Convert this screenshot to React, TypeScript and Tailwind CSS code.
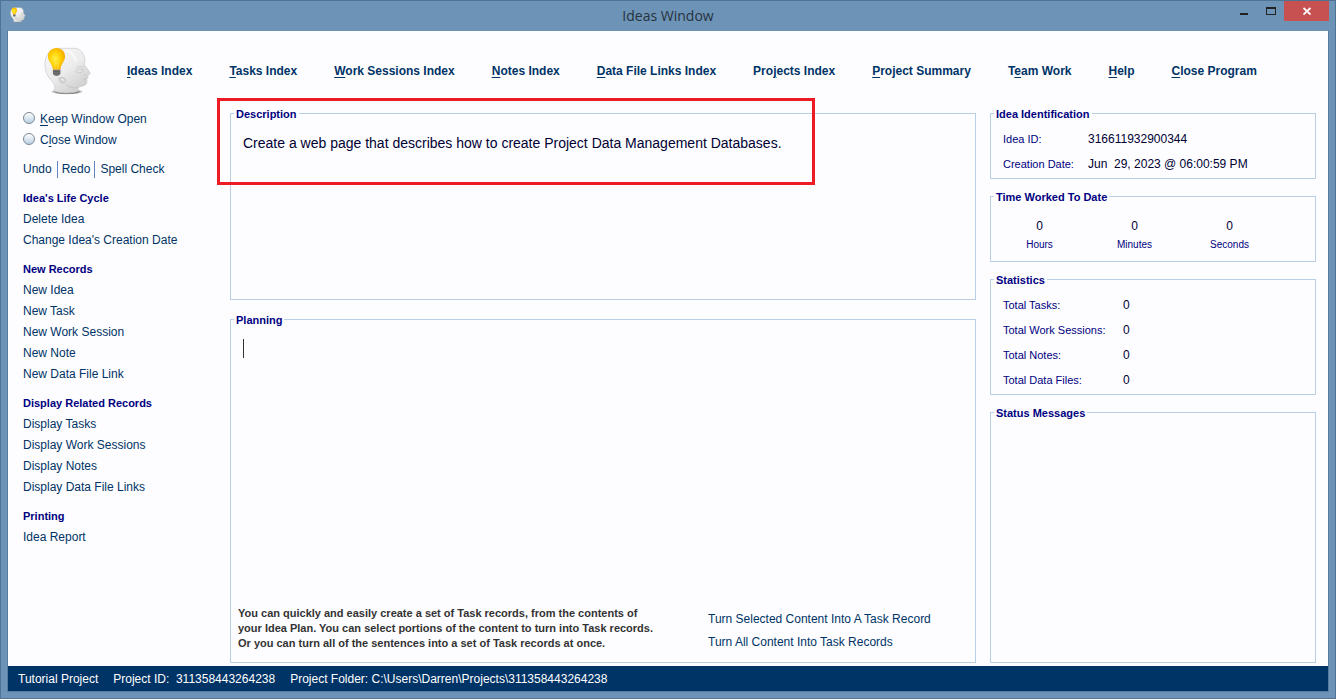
import { useState, type ReactNode } from 'react';
import clsx from 'clsx';

const navItems = [
  { label: 'Ideas Index', key: 0 },
  { label: 'Tasks Index', key: 0 },
  { label: 'Work Sessions Index', key: 0 },
  { label: 'Notes Index', key: 0 },
  { label: 'Data File Links Index', key: 0 },
  { label: 'Projects Index', key: 3 },
  { label: 'Project Summary', key: 0 },
  { label: 'Team Work', key: 1 },
  { label: 'Help', key: 0 },
  { label: 'Close Program', key: 0 },
];

const menuGroups = [
  { title: "Idea's Life Cycle", items: ['Delete Idea', "Change Idea's Creation Date"] },
  {
    title: 'New Records',
    items: ['New Idea', 'New Task', 'New Work Session', 'New Note', 'New Data File Link'],
  },
  {
    title: 'Display Related Records',
    items: ['Display Tasks', 'Display Work Sessions', 'Display Notes', 'Display Data File Links'],
  },
  { title: 'Printing', items: ['Idea Report'] },
];

const windowModes = [
  { value: 'keep', label: 'Keep Window Open', key: 0 },
  { value: 'close', label: 'Close Window', key: 1 },
];

const timeWorked = [
  { unit: 'Hours', value: 0 },
  { unit: 'Minutes', value: 0 },
  { unit: 'Seconds', value: 0 },
];

const statistics = [
  { label: 'Total Tasks:', value: 0 },
  { label: 'Total Work Sessions:', value: 0 },
  { label: 'Total Notes:', value: 0 },
  { label: 'Total Data Files:', value: 0 },
];

// Label with its keyboard shortcut letter underlined
function Mnemonic({ label, index }: { label: string; index: number }) {
  return (
    <span className="whitespace-pre">
      {label.slice(0, index)}
      <span className="underline underline-offset-2">{label[index]}</span>
      {label.slice(index + 1)}
    </span>
  );
}

function IdeaLogo({ id, className }: { id: string; className: string }) {
  return (
    <svg viewBox="40 28 146 150" className={className} aria-hidden="true">
      <defs>
        <linearGradient id={`${id}-head`} x1="0.1" y1="0" x2="0.8" y2="1">
          <stop offset="0" stopColor="#f7f7f7" />
          <stop offset="0.5" stopColor="#ececec" />
          <stop offset="1" stopColor="#cacaca" />
        </linearGradient>
        <radialGradient id={`${id}-shade`} cx="0.5" cy="0.5" r="0.5">
          <stop offset="0" stopColor="#444" />
          <stop offset="0.7" stopColor="#666" stopOpacity="0.8" />
          <stop offset="1" stopColor="#888" stopOpacity="0" />
        </radialGradient>
        <radialGradient id={`${id}-glow`} cx="0.42" cy="0.5" r="0.65">
          <stop offset="0" stopColor="#fff04a" />
          <stop offset="0.5" stopColor="#ffd000" />
          <stop offset="1" stopColor="#f59e00" />
        </radialGradient>
      </defs>
      <ellipse cx="110" cy="166" rx="50" ry="9" fill={`url(#${id}-shade)`} />
      <path
        d="M82 34H138C151 37 162 50 164 66C165 77 162 81 164 86L179 106C182 111 178 115 173 115L174 123L170 128C172 136 170 144 163 147C155 150 148 150 144 154C142 158 145 161 147 163C130 172 88 172 70 163C76 154 73 145 63 133C49 118 43 103 43 82C43 55 58 36 82 34Z"
        fill={`url(#${id}-head)`}
        stroke="#c8c8c8"
        strokeWidth="2"
      />
      <path d="M104 38C125 45 134 56 138 74" fill="none" stroke="#fff" strokeWidth="8" opacity="0.5" />
      <path d="M136 104C142 96 151 95 160 99L156 107C149 110 141 109 136 104Z" fill="#e2e2e2" stroke="#c2c2c2" strokeWidth="2" />
      <path d="M137 94C145 88 154 88 163 92" fill="none" stroke="#d0d0d0" strokeWidth="3" />
      <path d="M86 125C93 121 104 123 106 130C107 138 100 142 94 139C89 137 86 132 86 125Z" fill="#d6d6d6" stroke="#b8b8b8" strokeWidth="2" />
      <path d="M92 129C98 127 101 130 100 134" fill="none" stroke="#f4f4f4" strokeWidth="3" />
      <path d="M158 128L170 127M168 116C164 117 162 115 163 112" fill="none" stroke="#bcbcbc" strokeWidth="2" />
      <path d="M108 144C118 154 131 156 142 153" fill="none" stroke="#c2c2c2" strokeWidth="3" />
      <path
        d="M78 33C62 33 52 44 52 59C52 74 66 81 67 99H90C91 81 104 74 104 59C104 44 94 33 78 33Z"
        fill={`url(#${id}-glow)`}
      />
      <path d="M74 98L73 77L78 81L83 77L82 98" fill="none" stroke="#ffe96a" strokeWidth="2" />
      <path d="M67 99H90V109C90 115 84 118 78 118C72 118 67 115 67 109Z" fill="#777" />
      <path d="M68 104H89M68 110H89" stroke="#525252" strokeWidth="2" />
    </svg>
  );
}

function Group({ title, className, children }: { title: string; className?: string; children?: ReactNode }) {
  return (
    <fieldset className={clsx('min-w-0 border border-[#b8cfe5]', className)}>
      <legend className="ml-[3px] h-4 px-[2px] text-[11px] leading-[18px] font-bold text-[#000080]">{title}</legend>
      {children}
    </fieldset>
  );
}

function TitleBar() {
  return (
    <header className="grid h-[30px] grid-cols-[1fr_auto_1fr] items-start">
      <IdeaLogo id="small" className="mt-[6px] ml-[9px] h-4 w-4" />
      <h1 className="font-['Open_Sans','Noto_Sans',sans-serif] text-sm leading-[29px] text-[#26323d]">
        Ideas Window
      </h1>
      <div className="flex justify-end pr-[6px]">
        <button type="button" aria-label="Minimize" className="flex h-5 w-[27px] items-center justify-center">
          <svg width="8" height="8" aria-hidden="true">
            <path d="M0 6H8V8H0Z" fill="#222" />
          </svg>
        </button>
        <button type="button" aria-label="Maximize" className="flex h-5 w-[27px] items-center justify-center">
          <svg width="10" height="8" aria-hidden="true">
            <path d="M0 0H10V8H0ZM1 2V7H9V2Z" fill="#222" fillRule="evenodd" />
          </svg>
        </button>
        <button type="button" aria-label="Close" className="flex h-5 w-[45px] items-center justify-center bg-[#c75050]">
          <svg width="8" height="8" aria-hidden="true">
            <path d="M0.5 1L7.5 7.5M7.5 1L0.5 7.5" stroke="#fff" strokeWidth="1.8" />
          </svg>
        </button>
      </div>
    </header>
  );
}

function Sidebar() {
  const [mode, setMode] = useState('');

  return (
    <aside className="flex w-[222px] shrink-0 flex-col gap-2 pt-1 pl-[15px] text-[12px] leading-[21px] text-[#003366]">
      <div>
        {windowModes.map(item => (
          <label key={item.value} className="flex items-start gap-[5px]">
            <input
              type="radio"
              name="window-mode"
              value={item.value}
              checked={mode === item.value}
              onChange={() => setMode(item.value)}
              className="mt-[3px] h-3 w-3 appearance-none rounded-full border border-[#7b8894] bg-linear-to-b from-white to-[#b9cfe2] checked:bg-[#003366]"
            />
            <Mnemonic label={item.label} index={item.key} />
          </label>
        ))}
      </div>
      <div className="flex h-[21px] items-center">
        <button type="button" className="pr-[5px]">Undo</button>
        <button type="button" className="border-x border-[#6382bf] px-1 leading-[17px]">Redo</button>
        <button type="button" className="pl-[5px]">Spell Check</button>
      </div>
      {menuGroups.map(group => (
        <section key={group.title}>
          <h2 className="text-[11px] font-bold text-[#000080]">{group.title}</h2>
          <ul>
            {group.items.map(item => (
              <li key={item}>
                <a href="#">{item}</a>
              </li>
            ))}
          </ul>
        </section>
      ))}
    </aside>
  );
}

function Editors() {
  const [description, setDescription] = useState(
    'Create a web page that describes how to create Project Data Management Databases.'
  );
  const [plan, setPlan] = useState('');

  return (
    <main className="flex min-w-0 flex-1 flex-col gap-[11px]">
      <div className="relative">
        <Group title="Description" className="h-[195px]">
          <textarea
            aria-label="Description"
            value={description}
            onChange={e => setDescription(e.target.value)}
            className="block h-full w-full resize-none px-3 pt-[13px] text-[14px] leading-[18px] text-[#000033] outline-none"
          />
        </Group>
        {/* Highlight around the description text */}
        <div className="pointer-events-none absolute -top-[7px] -left-[13px] h-[87px] w-[598px] border-3 border-[#ed1c24]" />
      </div>

      <Group title="Planning" className="flex flex-1 flex-col">
        <div className="relative flex flex-1">
          <textarea
            aria-label="Planning"
            value={plan}
            onChange={e => setPlan(e.target.value)}
            className="min-h-24 w-full resize-none px-3 pt-3 text-[14px] leading-[18px] text-[#000033] caret-transparent outline-none"
          />
          <span className="pointer-events-none absolute top-3 left-3 h-[19px] w-px bg-[#333]" />
        </div>
        <div className="flex items-end gap-[25px] pb-2 pl-[7px]">
          <p className="w-[445px] pb-[3px] text-[11px] leading-[15px] font-bold text-[#333]">
            You can quickly and easily create a set of Task records, from the contents of
            <br />
            your Idea Plan. You can select portions of the content to turn into Task records.
            <br />
            Or you can turn all of the sentences into a set of Task records at once.
          </p>
          <div className="flex flex-col items-start text-[12px] leading-[23px] text-[#003366]">
            <button type="button">Turn Selected Content Into A Task Record</button>
            <button type="button">Turn All Content Into Task Records</button>
          </div>
        </div>
      </Group>
    </main>
  );
}

function Details() {
  return (
    <aside className="flex w-[326px] shrink-0 flex-col gap-[9px]">
      <Group title="Idea Identification" className="h-[74px]">
        <dl className="grid grid-cols-[85px_1fr] pt-[6px] pl-3 text-[12px] leading-[25px] text-[#000033]">
          <dt className="text-[11px] text-[#000080]">Idea ID:</dt>
          <dd>316611932900344</dd>
          <dt className="text-[11px] text-[#000080]">Creation Date:</dt>
          <dd className="whitespace-pre">Jun  29, 2023 @ 06:00:59 PM</dd>
        </dl>
      </Group>
      <Group title="Time Worked To Date" className="h-[74px]">
        <dl className="flex pt-3 pl-px text-center">
          {timeWorked.map(item => (
            <div key={item.unit} className="flex w-[95px] flex-col-reverse">
              <dt className="text-[10px] leading-[18px] text-[#000080]">{item.unit}</dt>
              <dd className="text-[12px] leading-5 text-[#000033]">{item.value}</dd>
            </div>
          ))}
        </dl>
      </Group>
      <Group title="Statistics" className="h-[124px]">
        <dl className="grid grid-cols-[120px_1fr] pt-[6px] pl-3 text-[12px] leading-[25px] text-[#000033]">
          {statistics.map(item => (
            <div key={item.label} className="contents">
              <dt className="text-[11px] text-[#000080]">{item.label}</dt>
              <dd>{item.value}</dd>
            </div>
          ))}
        </dl>
      </Group>
      <Group title="Status Messages" className="flex-1" />
    </aside>
  );
}

export default function App() {
  return (
    <div className="flex min-h-screen flex-col border border-[#4f7493] bg-[#6d94b7] font-['Liberation_Sans',Arial,sans-serif]">
      <TitleBar />
      <div className="mx-[6px] mb-[6px] flex flex-1 flex-col border border-t-0 border-[#587d9e] bg-[#fdfdff]">
        <div className="flex h-[74px] items-center pt-[5px] pl-9 text-[12px] font-bold whitespace-nowrap text-[#003366]">
          <IdeaLogo id="large" className="h-[50px] w-12 shrink-0" />
          <nav className="flex gap-[37px] pl-[35px]">
            {navItems.map(item => (
              <a key={item.label} href="#">
                <Mnemonic label={item.label} index={item.key} />
              </a>
            ))}
          </nav>
        </div>
        <div className="flex flex-1 gap-0 pr-3 pb-[3px]">
          <Sidebar />
          <Editors />
          <div className="ml-[14px] flex">
            <Details />
          </div>
        </div>
        <footer className="flex h-[25px] items-center gap-[15px] bg-[#003366] px-[10px] text-[12px] text-white">
          <span>Tutorial Project</span>
          <span className="whitespace-pre">Project ID:  311358443264238</span>
          <span>Project Folder: C:\Users\Darren\Projects\311358443264238</span>
        </footer>
      </div>
    </div>
  );
}
